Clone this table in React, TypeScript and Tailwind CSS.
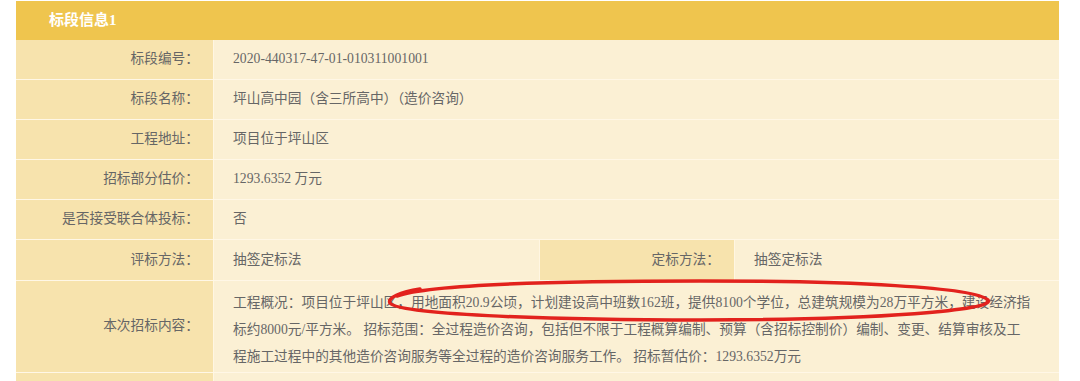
import React from 'react';

const font = { fontFamily: '"Liberation Serif", "Noto Sans CJK SC", serif' };

function Label({ children, className = '' }: { children: React.ReactNode; className?: string }) {
  return (
    <div
      className={`flex items-center justify-end bg-[#f7e3ad] pr-[14px] border-r border-[#fff6e2] text-[13.7px] text-[#666] ${className}`}
    >
      {children}
    </div>
  );
}

function Value({ children, className = '' }: { children: React.ReactNode; className?: string }) {
  return (
    <div className={`flex items-center bg-[#fbf0d4] pl-[19px] text-[13.7px] text-[#666] ${className}`}>
      {children}
    </div>
  );
}

function Row({ label, value }: { label: string; value: string }) {
  return (
    <div className="flex h-[40px] border-b border-[#fff7e6]">
      <Label className="w-[198px]">{label}</Label>
      <Value className="flex-1">{value}</Value>
    </div>
  );
}

export default function App() {
  return (
    <div className="relative w-[1080px] h-[381px] overflow-hidden bg-white" style={font}>
      <div className="ml-[16px] mt-[1px] w-[1043px]">
        <div className="flex items-center h-[39px] bg-[#efc54e] pl-[33px] text-white text-[15px] font-bold">
          标段信息1
        </div>
        <Row label="标段编号：" value="2020-440317-47-01-010311001001" />
        <Row label="标段名称：" value="坪山高中园（含三所高中）（造价咨询）" />
        <Row label="工程地址：" value="项目位于坪山区" />
        <Row label="招标部分估价：" value="1293.6352 万元" />
        <Row label="是否接受联合体投标：" value="否" />
        <div className="flex h-[41px] border-b border-[#fff7e6]">
          <Label className="w-[198px]">评标方法：</Label>
          <Value className="w-[325px]">抽签定标法</Value>
          <Label className="w-[196px] border-l border-[#fff6e2]">定标方法：</Label>
          <Value className="flex-1">抽签定标法</Value>
        </div>
        <div className="flex h-[92px] border-b border-[#fff7e6]">
          <Label className="w-[198px]">本次招标内容：</Label>
          <div className="flex-1 bg-[#fbf0d4] pl-[19px] pt-[8px] text-[13.7px] leading-[27px] text-[#666] whitespace-nowrap">
            工程概况：项目位于坪山区，用地面积20.9公顷，计划建设高中班数162班，提供8100个学位，总建筑规模为28万平方米，建设经济指
            <br />
            标约8000元/平方米。 招标范围：全过程造价咨询，包括但不限于工程概算编制、预算（含招标控制价）编制、变更、结算审核及工
            <br />
            程施工过程中的其他造价咨询服务等全过程的造价咨询服务工作。 招标暂估价：1293.6352万元
          </div>
        </div>
        <div className="flex h-[40px]">
          <Label className="w-[198px]"> </Label>
          <Value className="flex-1"> </Value>
        </div>
      </div>

      <svg className="absolute left-0 top-0 pointer-events-none" width="1080" height="381">
        <path
          d="M 397 296 C 430 284, 560 281, 700 281 C 850 281, 975 287, 988 300 C 996 310, 880 320, 700 320 C 540 320, 398 314, 390 303 C 387 298, 400 292, 420 289"
          fill="none"
          stroke="#e2221d"
          strokeWidth="3.5"
          strokeLinecap="round"
        />
      </svg>
    </div>
  );
}
